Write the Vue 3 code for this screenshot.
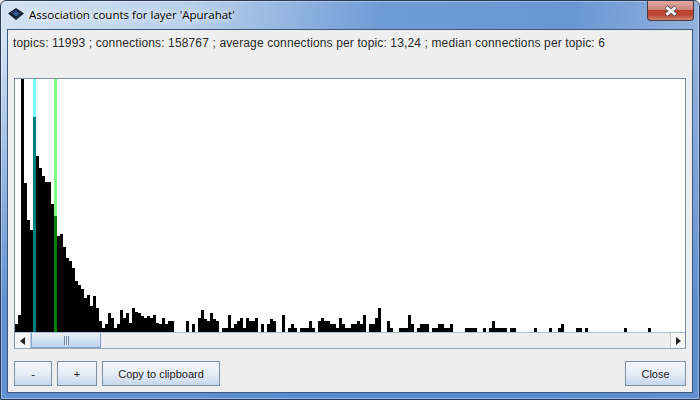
<script setup>
const heights = {
  15:8,18:17,21:253,24:149,27:112,30:102,33:215,36:176,39:164,42:156,45:150,48:150,51:128,54:116,57:96,60:98,63:85,66:74,69:71,72:64,75:51,78:47,81:43,84:34,87:37,90:26,93:36,96:24,99:11,102:4,105:8,108:19,111:14,114:4,117:8,
  120:22,123:14,126:19,129:9,132:24,135:20,138:19,141:16,144:14,147:16,150:14,153:17,156:9,159:8,162:14,165:8,168:11,171:11,
  186:11,192:8,198:14,201:22,204:13,207:11,210:19,213:13,216:11,222:4,225:4,228:17,231:4,234:8,237:11,240:14,243:4,246:14,249:11,252:11,255:14,
  261:8,267:8,270:13,273:11,282:17,288:4,291:8,294:4,300:4,303:4,306:4,309:11,312:4,318:11,321:14,324:11,327:11,330:8,333:8,336:4,339:14,342:8,345:4,348:4,351:8,354:8,357:11,360:8,363:17,369:8,372:8,375:14,378:24,387:11,390:4,399:4,402:4,405:4,408:17,
  411:8,417:4,420:8,423:8,426:8,432:4,435:4,438:8,441:8,444:4,447:4,450:8,465:4,468:4,471:4,474:4,483:4,489:4,492:11,495:4,498:4,501:4,504:4,510:4,513:4,534:4,549:4,558:4,561:8,576:4,579:4,585:4,624:4,648:4
}
const markers = { 33: 'avg', 54: 'med' }
const bars = Array.from({ length: 223 }, (_, i) => {
  const x = 15 + i * 3
  return { x, h: heights[x] || 0, kind: markers[x] || '' }
})
</script>

<template>
  <div class="window">
    <div class="titlebar">
      <svg class="logo" width="16" height="12" viewBox="0 0 16 12">
        <path d="M8 0 L16 5.5 L8 12 L0 5.5 Z" fill="#111c2c" />
        <path d="M4.5 5.5 L8 3 L12 5.5 L8 8.5 Z" fill="#2f5f96" />
        <path d="M2.5 5 L8 1.2 L9 2 L3.5 5.8 Z" fill="#2a3c54" />
        <path d="M8 10 L13.5 6 L14 6.6 L8 11 Z" fill="#1f3f66" />
      </svg>
      <span class="title">Association counts for layer 'Apurahat'</span>
      <div class="close-x">
        <svg width="16" height="12" viewBox="0 0 16 12">
          <path d="M3 2 L13 10 M13 2 L3 10" stroke="#4a4a50" stroke-width="4.4" fill="none" />
          <path d="M3.4 2.4 L12.6 9.6 M12.6 2.4 L3.4 9.6" stroke="#f2f2f2" stroke-width="3" fill="none" />
        </svg>
      </div>
    </div>
    <div class="panel">
      <p class="stats">topics: 11993 ; connections: 158767 ; average connections per topic: 13,24 ; median connections per topic: 6</p>
      <div class="chart-box">
        <div class="canvas">
          <div v-for="b in bars" :key="b.x" class="col" :class="b.kind">
            <div class="fill" :style="{ height: b.h + 'px' }"></div>
          </div>
        </div>
        <div class="scrollbar">
          <div class="arrow first"><span class="tri left"></span></div>
          <div class="thumb"><span class="grip"></span></div>
          <div class="track"></div>
          <div class="arrow"><span class="tri right"></span></div>
        </div>
      </div>
      <div class="actions">
        <button class="btn minus">-</button>
        <button class="btn plus">+</button>
        <button class="btn copy">Copy to clipboard</button>
        <button class="btn close">Close</button>
      </div>
    </div>
  </div>
</template>

<style scoped>
.window {
  width: 700px;
  height: 400px;
  box-sizing: border-box;
  border: 1px solid #2b3a55;
  border-radius: 6px 6px 0 0;
  padding: 0 6px 6px;
  display: flex;
  flex-direction: column;
  background:
    linear-gradient(rgba(86, 138, 208, 0) 10%, rgba(86, 138, 208, 0.9) 75%),
    linear-gradient(100deg, #d4e3f3 0%, #b8d0ea 25%, #6f9bd6 50%, #6a97d4 75%, #a9c1e2 100%);
  box-shadow: inset 0 0 0 1px rgba(255, 255, 255, 0.35);
  overflow: hidden;
}
.titlebar {
  height: 28px;
  flex: none;
  display: flex;
  align-items: flex-start;
  padding-left: 1px;
}
.logo {
  margin-top: 7px;
  flex: none;
}
.title {
  margin: 6px 0 0 5px;
  font: 11.5px/16px "Open Sans", "Liberation Sans", sans-serif;
  color: #000;
  text-shadow: 0 0 6px #fff, 0 0 8px #fff;
}
.close-x {
  margin: 0 -1px 0 auto;
  width: 47px;
  height: 20px;
  box-sizing: border-box;
  border: 1px solid #4a3a42;
  border-top: 0;
  border-radius: 0 0 4px 4px;
  background: linear-gradient(#e2aaa2 0%, #d0837a 45%, #bc4230 50%, #bc4632 72%, #d08070 100%);
  display: flex;
  align-items: center;
  justify-content: center;
}
.panel {
  flex: 1;
  box-sizing: border-box;
  border: 1px solid #3c5878;
  background: #eeeeee;
  padding: 0 6px;
  display: flex;
  flex-direction: column;
  min-height: 0;
}
.stats {
  margin: 6px 0 0 -1px;
  height: 42px;
  font: 12px/14px "Liberation Sans", sans-serif;
  letter-spacing: 0.135px;
  color: #2a2a2a;
  white-space: nowrap;
}
.chart-box {
  box-sizing: border-box;
  border: 1px solid #7a8fa5;
  border-bottom-color: #9aa6b2;
  background: #fff;
  flex: none;
}
.canvas {
  height: 253px;
  display: flex;
  align-items: stretch;
  background: #fff;
  overflow: hidden;
}
.col {
  width: 3px;
  flex: none;
  display: flex;
  align-items: flex-end;
}
.fill {
  width: 3px;
  background: #000;
}
.col.avg {
  background: #80ffff;
}
.col.avg .fill {
  background: #008080;
}
.col.med {
  background: #80ff80;
}
.col.med .fill {
  background: #008000;
}
.scrollbar {
  height: 16px;
  box-sizing: border-box;
  border-top: 1px solid #a9bfd9;
  background: #eeeeee;
  display: flex;
}
.arrow {
  width: 15px;
  flex: none;
  background: #f6f6f6;
  border-left: 1px solid #c8ccd0;
  box-sizing: border-box;
  display: flex;
  align-items: center;
  justify-content: center;
}
.arrow.first {
  width: 16px;
  border-left: 0;
  border-right: 1px solid #c8ccd0;
}
.tri {
  width: 0;
  height: 0;
  border-top: 4px solid transparent;
  border-bottom: 4px solid transparent;
}
.tri.left {
  border-right: 5px solid #222;
}
.tri.right {
  border-left: 5px solid #222;
}
.thumb {
  width: 70px;
  flex: none;
  box-sizing: border-box;
  border: 1px solid #7fa3d4;
  border-top: 0;
  background: linear-gradient(#e8f0f9, #bdd3ec);
  display: flex;
  align-items: center;
  justify-content: center;
}
.grip {
  width: 5px;
  height: 9px;
  background: repeating-linear-gradient(90deg, #6f88a8 0 1px, #e6eef8 1px 2px);
}
.track {
  flex: 1;
}
.actions {
  margin-top: 12px;
  display: flex;
  gap: 5px;
}
.btn {
  height: 25px;
  box-sizing: border-box;
  border: 1px solid #7c92a8;
  background: linear-gradient(#f4f7fb 0%, #e6edf6 50%, #c5d7ea 100%);
  font: 11px "Liberation Sans", sans-serif;
  color: #222;
  padding: 0;
  border-radius: 0;
}
.minus { width: 38px; }
.plus { width: 40px; }
.copy { width: 118px; }
.close { width: 61px; margin-left: auto; }
</style>

<style>
html, body { background: #fff; }
</style>
